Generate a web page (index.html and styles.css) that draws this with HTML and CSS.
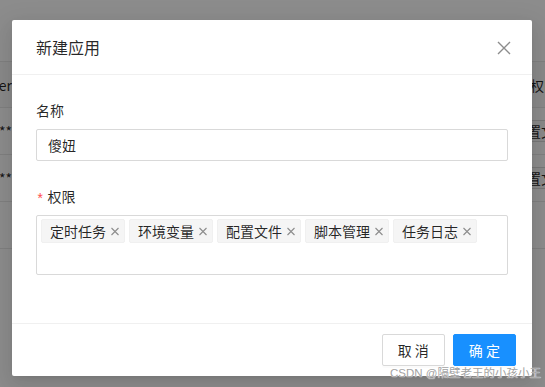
FILE: index.html
```html
<!DOCTYPE html>
<html lang="zh-CN">
<head>
<meta charset="utf-8">
<title>新建应用</title>
<link rel="stylesheet" href="styles.css">
</head>
<body>
<div class="page">
  <div class="page-top"></div>
  <div class="row row-head">
    <div class="cell-left"><span>Owner</span></div>
    <div class="cell-right">权限</div>
  </div>
  <div class="row">
    <div class="cell-left"><span>******</span></div>
    <div class="cell-right"><span class="bg-tag">配置文件</span></div>
  </div>
  <div class="row">
    <div class="cell-left"><span>******</span></div>
    <div class="cell-right"><span class="bg-tag">配置文件</span></div>
  </div>
  <div class="row"></div>
</div>

<div class="mask"></div>

<div class="modal">
  <div class="modal-header">
    <div class="modal-title">新建应用</div>
    <button class="modal-close" aria-label="Close">
      <svg width="14" height="14" viewBox="0 0 14 14"><path d="M1 1 L13 13 M13 1 L1 13" stroke="#8c8c8c" stroke-width="1.4" fill="none"/></svg>
    </button>
  </div>
  <div class="modal-body">
    <div class="form-item">
      <label class="form-label">名称</label>
      <div class="input">傻妞</div>
    </div>
    <div class="form-item">
      <label class="form-label"><span class="req">*</span>权限</label>
      <div class="select">
        <span class="tag">定时任务<svg class="tag-x" width="10" height="10" viewBox="0 0 10 10"><path d="M1.5 2 L8.5 9 M8.5 2 L1.5 9" stroke="#8c8c8c" stroke-width="1.1" fill="none"/></svg></span>
        <span class="tag">环境变量<svg class="tag-x" width="10" height="10" viewBox="0 0 10 10"><path d="M1.5 2 L8.5 9 M8.5 2 L1.5 9" stroke="#8c8c8c" stroke-width="1.1" fill="none"/></svg></span>
        <span class="tag">配置文件<svg class="tag-x" width="10" height="10" viewBox="0 0 10 10"><path d="M1.5 2 L8.5 9 M8.5 2 L1.5 9" stroke="#8c8c8c" stroke-width="1.1" fill="none"/></svg></span>
        <span class="tag">脚本管理<svg class="tag-x" width="10" height="10" viewBox="0 0 10 10"><path d="M1.5 2 L8.5 9 M8.5 2 L1.5 9" stroke="#8c8c8c" stroke-width="1.1" fill="none"/></svg></span>
        <span class="tag">任务日志<svg class="tag-x" width="10" height="10" viewBox="0 0 10 10"><path d="M1.5 2 L8.5 9 M8.5 2 L1.5 9" stroke="#8c8c8c" stroke-width="1.1" fill="none"/></svg></span>
      </div>
    </div>
  </div>
  <div class="modal-footer">
    <button class="btn">取 消</button>
    <button class="btn btn-primary">确 定</button>
  </div>
</div>

<div class="watermark">CSDN @隔壁老王的小孩小王</div>
</body>
</html>
```

FILE: styles.css
```css
* { box-sizing: border-box; }

html, body {
  margin: 0;
  padding: 0;
  width: 545px;
  height: 387px;
  overflow: hidden;
  font-family: "Noto Sans CJK SC", "Liberation Sans", sans-serif;
  font-size: 14px;
  color: rgba(0, 0, 0, 0.85);
}

.page {
  height: 387px;
  background: #fff;
  display: flex;
  flex-direction: column;
}

.page-top {
  height: 62px;
  border-bottom: 1px solid #e8e8e8;
  flex: none;
}

.row {
  height: 47px;
  flex: none;
  display: flex;
  align-items: center;
  justify-content: space-between;
  border-bottom: 1px solid #e8e8e8;
}

.row-head {
  height: 46px;
  background: #fafafa;
}

.cell-left {
  width: 12px;
  overflow: hidden;
  display: flex;
  justify-content: flex-end;
  white-space: nowrap;
}

.cell-right {
  width: 37px;
  white-space: nowrap;
  overflow: hidden;
}

.row-head .cell-right {
  width: 15px;
}

.bg-tag {
  display: inline-block;
  border: 1px solid #d9d9d9;
  background: #fafafa;
  padding: 0 7px 0 4px;
  line-height: 20px;
  font-size: 14px;
}

.mask {
  position: absolute;
  inset: 0;
  background: rgba(0, 0, 0, 0.45);
}

.modal {
  position: absolute;
  top: 20px;
  left: 12px;
  width: 520px;
  background: #fff;
  border-radius: 2px;
  box-shadow: 0 3px 6px -4px rgba(0,0,0,.12), 0 6px 16px 0 rgba(0,0,0,.08), 0 9px 28px 8px rgba(0,0,0,.05);
}

.modal-header {
  position: relative;
  padding: 16px 24px;
  border-bottom: 1px solid #f0f0f0;
}

.modal-title {
  font-size: 16px;
  line-height: 22px;
  color: rgba(0, 0, 0, 0.85);
}

.modal-close {
  position: absolute;
  top: 0;
  right: 0;
  width: 56px;
  height: 56px;
  border: 0;
  background: transparent;
  padding: 0;
  display: flex;
  align-items: center;
  justify-content: center;
}

.modal-body {
  padding: 24px 24px 48px;
  display: flex;
  flex-direction: column;
  gap: 24px;
}

.form-item {
  display: flex;
  flex-direction: column;
}

.form-label {
  height: 30px;
  line-height: 22px;
  padding-bottom: 8px;
  font-size: 14px;
  display: flex;
  align-items: flex-start;
}

.req {
  color: #ff4d4f;
  font-family: "Liberation Mono", monospace;
  font-size: 14px;
  line-height: 22px;
  padding-top: 4px;
  margin-right: 3px;
  margin-left: 0;
}

.input {
  height: 32px;
  border: 1px solid #d9d9d9;
  border-radius: 2px;
  padding: 4px 11px;
  line-height: 22px;
}

.select {
  height: 60px;
  border: 1px solid #d9d9d9;
  border-radius: 2px;
  padding: 3px 4px;
  display: flex;
  flex-wrap: wrap;
  align-content: flex-start;
  gap: 4px;
}

.tag {
  height: 24px;
  display: inline-flex;
  align-items: center;
  background: #f5f5f5;
  border: 1px solid #f0f0f0;
  border-radius: 2px;
  padding: 0 4px 0 8px;
  line-height: 22px;
  font-size: 14px;
}

.tag-x {
  margin-left: 4px;
  flex: none;
}

.modal-footer {
  padding: 10px 16px;
  border-top: 1px solid #f0f0f0;
  display: flex;
  justify-content: flex-end;
  gap: 8px;
}

.btn {
  height: 32px;
  padding: 4px 15px;
  font-family: "Noto Sans CJK SC", "Liberation Sans", sans-serif;
  font-size: 14px;
  line-height: 22px;
  border: 1px solid #d9d9d9;
  border-radius: 2px;
  background: #fff;
  color: rgba(0, 0, 0, 0.85);
  box-shadow: 0 2px 0 rgba(0,0,0,.015);
}

.btn-primary {
  background: #1890ff;
  border-color: #1890ff;
  color: #fff;
}

.watermark {
  position: absolute;
  left: 390px;
  top: 365px;
  font-family: "Liberation Sans", "Noto Sans CJK SC", sans-serif;
  font-size: 11.5px;
  line-height: 16px;
  white-space: nowrap;
  color: #a3a3a3;
  text-shadow: 0 0 1px #ffffff, 0 0 1px #ffffff;
}
```
